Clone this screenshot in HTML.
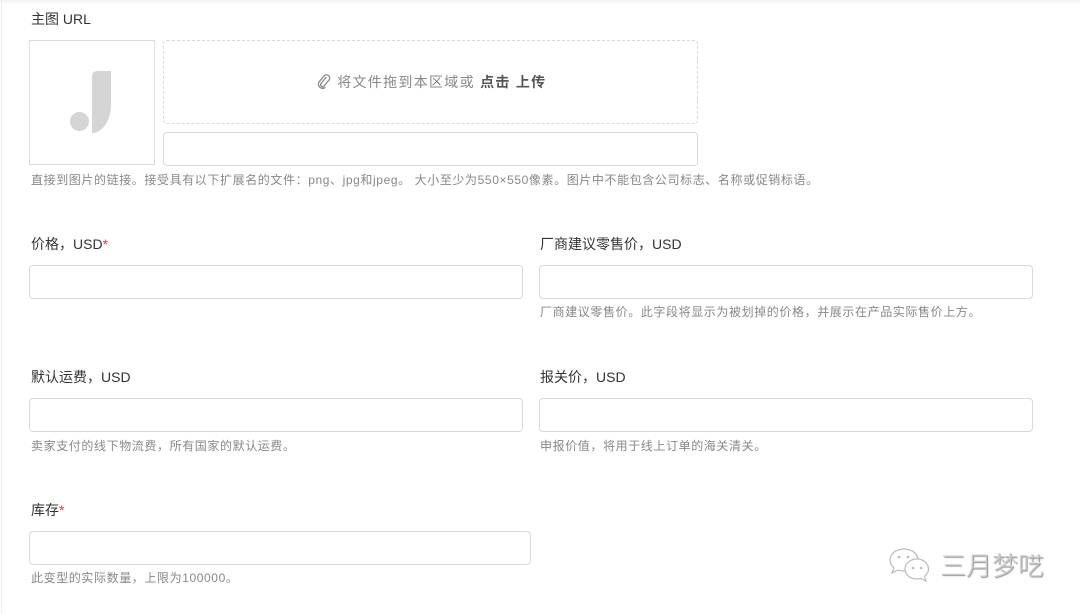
<!DOCTYPE html>
<html><head><meta charset="utf-8"><style>
body{margin:0;width:1080px;height:614px;background:#fff;font-family:"Liberation Sans","Noto Sans CJK SC",sans-serif;color:#333;position:relative;overflow:hidden}
.a{position:absolute}
.lbl{font-size:14px;color:#333;line-height:18px}
.inp{border:1px solid #d9d9d9;border-radius:4px;box-sizing:border-box;height:34px}
.help{font-size:12px;color:#888;line-height:14px;letter-spacing:0.6px;white-space:nowrap}
.req{color:#e4393c}
</style></head><body>
<div class="a" style="left:0;top:0;width:1080px;height:4px;background:linear-gradient(#f0f0f0,#fff)"></div>
<div class="a" style="left:1px;top:0;width:1px;height:614px;background:#eee"></div>
<div class="a lbl" style="left:31px;top:10px">主图 URL</div>
<div class="a" style="left:29px;top:40px;width:126px;height:125px;border:1px solid #ddd;box-sizing:border-box"></div>
<div class="a" style="left:70px;top:112px;width:19px;height:19px;border-radius:50%;background:#d5d5d5"></div>
<div class="a" style="left:92px;top:71px;width:19px;height:62px;background:#d5d5d5;border-radius:5px 0 0 0;border-bottom-right-radius:19px 28px"></div>
<div class="a" style="left:163px;top:40px;width:535px;height:84px;border:1px dashed #d9d9d9;border-radius:4px;box-sizing:border-box"></div>
<div class="a" style="left:316px;top:73px;font-size:14px;color:#888;line-height:18px;letter-spacing:1.3px;white-space:nowrap">
<svg width="16" height="16" viewBox="0 0 16 16" style="vertical-align:-2px"><path d="M10.5 4 L5 10.5 a2 2 0 0 0 3 2.6 L13 7 a3.2 3.2 0 0 0 -4.7-4.3 L3.2 8.7 a4.2 4.2 0 0 0 6.2 5.6" fill="none" stroke="#888" stroke-width="1.3"/></svg>
 将文件拖到本区域或 <b style="color:#555">点击 上传</b></div>
<div class="a inp" style="left:163px;top:132px;width:535px"></div>
<div class="a help" style="left:31px;top:173px">直接到图片的链接。接受具有以下扩展名的文件：png、jpg和jpeg。 大小至少为550×550像素。图片中不能包含公司标志、名称或促销标语。</div>

<div class="a lbl" style="left:31px;top:235px">价格，USD<span class="req">*</span></div>
<div class="a inp" style="left:29px;top:265px;width:494px"></div>
<div class="a lbl" style="left:540px;top:235px">厂商建议零售价，USD</div>
<div class="a inp" style="left:539px;top:265px;width:494px"></div>
<div class="a help" style="left:540px;top:305px">厂商建议零售价。此字段将显示为被划掉的价格，并展示在产品实际售价上方。</div>

<div class="a lbl" style="left:31px;top:368px">默认运费，USD</div>
<div class="a inp" style="left:29px;top:398px;width:494px"></div>
<div class="a help" style="left:31px;top:439px">卖家支付的线下物流费，所有国家的默认运费。</div>
<div class="a lbl" style="left:540px;top:368px">报关价，USD</div>
<div class="a inp" style="left:539px;top:398px;width:494px"></div>
<div class="a help" style="left:540px;top:439px">申报价值，将用于线上订单的海关清关。</div>

<div class="a lbl" style="left:31px;top:501px">库存<span class="req">*</span></div>
<div class="a inp" style="left:29px;top:531px;width:502px"></div>
<div class="a help" style="left:31px;top:571px">此变型的实际数量，上限为100000。</div>

<svg class="a" style="left:888px;top:547px" width="46" height="38" viewBox="0 0 46 38"><g fill="#fff" stroke="#bbb" stroke-width="1.2"><path d="M16 2C8 2 2 7 2 13c0 3 2 6 4 8l-2 5 6-3c2 1 4 1 6 1 8 0 14-5 14-11S24 2 16 2z"/><path d="M29 12c-7 0-12 4.5-12 10s5 10 12 10c1.5 0 3-.3 4-.7l5 3-1.5-5c2.5-2 4-4.5 4-7.3 0-5.5-5-10-11.5-10z"/></g><g fill="#bbb"><circle cx="11" cy="10" r="1.3"/><circle cx="20" cy="10" r="1.3"/><circle cx="25" cy="21" r="1.3"/><circle cx="33" cy="21" r="1.3"/></g></svg>
<div class="a" style="left:940px;top:550px;font-size:26px;color:#ccc;line-height:32px;font-weight:300;text-shadow:1px 1px 1px #888">三月梦呓</div>
</body></html>
